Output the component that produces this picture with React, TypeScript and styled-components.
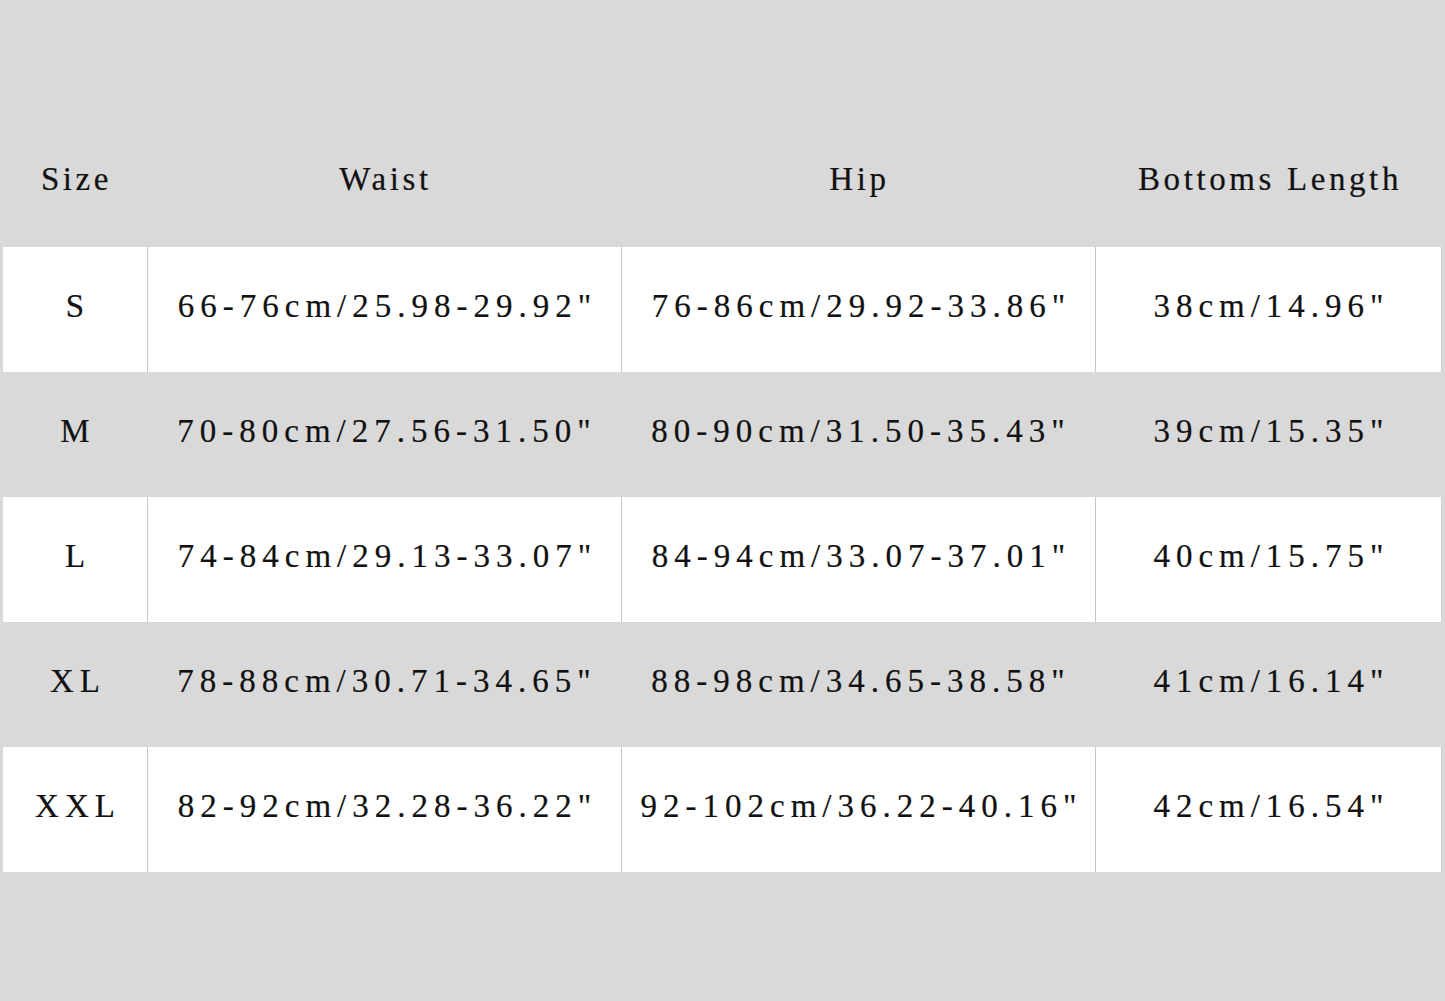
import React from 'react';
import styled, { createGlobalStyle } from 'styled-components';

const GlobalStyle = createGlobalStyle`
  html, body {
    margin: 0;
    padding: 0;
    background: #d9d9d9;
  }
  body {
    font-family: "Liberation Serif", "Times New Roman", serif;
    color: #111111;
  }
`;

const headers = ['Size', 'Waist', 'Hip', 'Bottoms Length'];

const rows = [
  ['S', '66-76cm/25.98-29.92"', '76-86cm/29.92-33.86"', '38cm/14.96"'],
  ['M', '70-80cm/27.56-31.50"', '80-90cm/31.50-35.43"', '39cm/15.35"'],
  ['L', '74-84cm/29.13-33.07"', '84-94cm/33.07-37.01"', '40cm/15.75"'],
  ['XL', '78-88cm/30.71-34.65"', '88-98cm/34.65-38.58"', '41cm/16.14"'],
  ['XXL', '82-92cm/32.28-36.22"', '92-102cm/36.22-40.16"', '42cm/16.54"'],
];

export default function App() {
  return (
    <Page>
      <GlobalStyle />
      <Chart>
        <HeadRow>
          {headers.map((h) => (
            <HeadCell key={h}>{h}</HeadCell>
          ))}
        </HeadRow>
        {rows.map((row, i) => (
          <Row key={row[0]} striped={i % 2 === 0}>
            {row.map((val, j) => (
              <Cell key={j} striped={i % 2 === 0} divided={j > 0}>
                {val}
              </Cell>
            ))}
          </Row>
        ))}
      </Chart>
    </Page>
  );
}

const Page = styled.main`
  width: 1445px;
  height: 1001px;
  padding: 117px 3px 0 3px;
  box-sizing: border-box;
`;

const Chart = styled.section`
  display: flex;
  flex-direction: column;
  width: 1439px;
`;

const columns = '144px 474px 474px 347px';

const HeadRow = styled.div`
  display: grid;
  grid-template-columns: ${columns};
  height: 130px;
`;

const Row = styled.div<{ striped?: boolean }>`
  display: grid;
  grid-template-columns: ${columns};
  height: 125px;
  background: ${({ striped }) => (striped ? '#ffffff' : 'transparent')};
`;

const HeadCell = styled.div`
  display: flex;
  align-items: center;
  justify-content: center;
  font-size: 33px;
  letter-spacing: 3.6px;
  padding: 0 0 6px 3px;
  -webkit-text-stroke: 0.2px #111;
`;

const Cell = styled.div<{ striped: boolean; divided: boolean }>`
  display: flex;
  align-items: center;
  justify-content: center;
  font-size: 33px;
  letter-spacing: 6px;
  white-space: nowrap;
  padding: 0 0 7px 6px;
  -webkit-text-stroke: 0.2px #111;
  border-left: ${({ striped, divided }) =>
    striped && divided ? '1.5px solid #c6c6c6' : 'none'};
  &:last-child {
    border-right: ${({ striped }) => (striped ? '1px solid #d0d0e0' : 'none')};
  }
`;
